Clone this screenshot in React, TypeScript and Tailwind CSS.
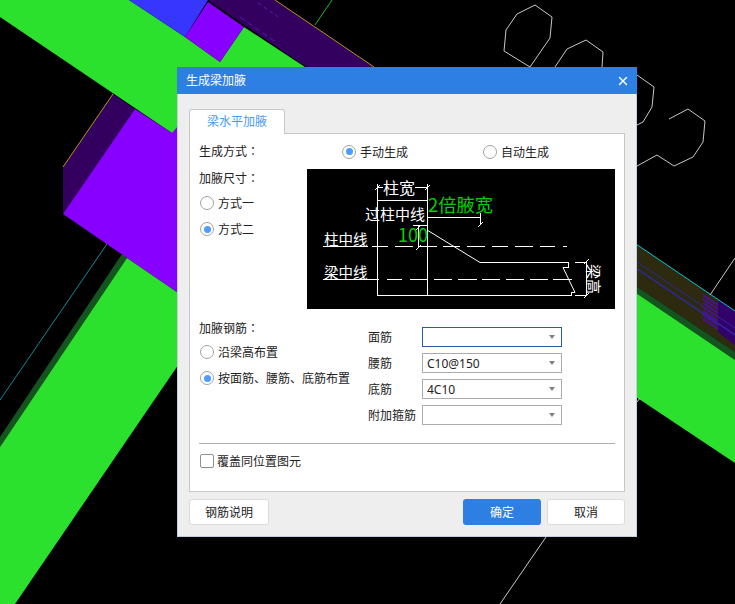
import { X } from "lucide-react";

const uiFont = "font-['Noto_Sans','Noto_Sans_CJK_SC',sans-serif]";

function Backdrop() {
  return (
    <svg className="absolute inset-0" width={735} height={604} viewBox="0 0 735 604">
      {/* upper left beams */}
      <polygon points="208,0 275,0 400,85 340,85 300,63" fill="#330060" />
      <polygon points="0,0 129,0 185,37 220,62 244,27 340,90 172,133 0,17" fill="#2ce02e" />
      <polygon points="129,0 208,0 185,37" fill="#3636ff" />
      <polygon points="208,2 244,27 220,62 185,37" fill="#8800ff" />
      <line x1="275" y1="0" x2="374" y2="67" stroke="#b8941a" strokeWidth="1" />
      <line x1="332" y1="0" x2="315" y2="25" stroke="#1fb52a" strokeWidth="1" />
      <line x1="258" y1="3" x2="278" y2="17" stroke="#4a1fb0" strokeWidth="1" strokeDasharray="4 3" />
      <line x1="240" y1="17" x2="277" y2="43" stroke="#4a1fb0" strokeWidth="1" strokeDasharray="6 3" />

      {/* column block */}
      <polygon points="63,167 113,94 135,109 63,214" fill="#330060" />
      <polygon points="63,214 135,109 172,133 200,100 260,140 200,308" fill="#8800ff" />
      <line x1="63" y1="167" x2="113" y2="94" stroke="#b8941a" strokeWidth="1" />
      <line x1="107" y1="244" x2="0" y2="400" stroke="#0f8a96" strokeWidth="1" />

      {/* lower left beam */}
      <polygon points="122,254 127,258 0,447 0,437" fill="#14551f" />
      <polygon points="127,258 200,308 200,333 15,604 0,604 0,447" fill="#2ce02e" />

      {/* right beam */}
      <polygon points="630,240 735,311 735,352 630,282" fill="#2d2a10" />
      <polygon points="718,300 735,311 735,345 718,332" fill="#34006a" />
      <polygon points="630,282 735,352 735,360 630,289" fill="#14551f" />
      <polygon points="630,289 735,360 735,463 630,393" fill="#2ce02e" />
      <line x1="630" y1="240" x2="735" y2="311" stroke="#00c8d8" strokeWidth="1" />
      <line x1="630" y1="257" x2="735" y2="328" stroke="#2a2a9a" strokeWidth="1" />
      <line x1="630" y1="264" x2="735" y2="335" stroke="#2a2aaa" strokeWidth="1.5" />
      {[295, 299, 303, 307, 311, 315, 319].map((y) => (
        <line key={y} x1="703" y1={y} x2="718" y2={y + 10} stroke="#4b0f9a" strokeWidth="2" />
      ))}

      {/* white outlines */}
      <g fill="none" stroke="#c8c8c8" strokeWidth="1">
        <polyline points="530,67 504,51 506,30 517,14 535,5 552,17 550,38 530,67" />
        <polyline points="555,67 567,49 586,40 603,52 602,67" />
        <polyline points="637,75 654,87 652,107 643,122 637,125" />
        <polyline points="669,119 688,109 705,121 703,142 693,157 674,166 657,155 637,166" />
        <line x1="735" y1="258" x2="710" y2="295" />
        <line x1="546" y1="537" x2="500" y2="604" />
        <line x1="637" y1="402" x2="640" y2="398" />
      </g>
    </svg>
  );
}

function Diagram() {
  const cad = "'Noto Sans CJK SC',sans-serif";
  return (
    <svg className="block bg-black" width={308} height={140} viewBox="307 169 308 140">
      <g stroke="#fff" strokeWidth="1" fill="none" shapeRendering="crispEdges">
        <path d="M377.5 184V295.5M427.5 184V295.5M377 200.5H428" />
        <path d="M377 187.5H383M415 187.5H428" />
        <path d="M427 217.5H480.5M480.5 213V225M413 225.5H428M418.5 225V247" />
        <path d="M323 246.5H368M323 279.5H379" />
        <path d="M480 262.5H568.5V267.5H563M575 292.5H571.5V295.5H377M575 262.5H587M575 295.5H587M586.5 262V295" />
      </g>
      <g stroke="#fff" strokeWidth="1" fill="none">
        <path d="M427 230L480 262.5M563 267.5L575 292.5" />
        <path d="M375 190L380 185M425 190L430 185M416 230L421 225M416 250L421 245M478 227L483 222M584 264L589 259M584 298L589 293" />
      </g>
      <g stroke="#fff" strokeWidth="1" fill="none" shapeRendering="crispEdges">
        <path d="M372 246.5H388M395 246.5H413M420 246.5H437M443 246.5H460M467 246.5H485M492 246.5H508M515 246.5H533M540 246.5H555M563 246.5H567" />
        <path d="M387 279.5H402M410 279.5H428M434 279.5H452M458 279.5H477M482 279.5H500M506 279.5H524M530 279.5H548M553 279.5H572" />
      </g>
      <g fontFamily={cad} fill="#fff">
        <text x="383" y="194" fontSize="16">柱宽</text>
        <text x="365" y="220" fontSize="15">过柱中线</text>
        <text x="324" y="245" fontSize="14.5">柱中线</text>
        <text x="324" y="278" fontSize="14.5">梁中线</text>
        <text transform="translate(588 264) rotate(90)" fontSize="15">梁高</text>
      </g>
      <g fontFamily={cad} fill="#00d000">
        <text x="428" y="212" fontSize="18" textLength={65} lengthAdjust="spacingAndGlyphs">2倍腋宽</text>
        <text x="398" y="242" fontSize="19" textLength={30} lengthAdjust="spacingAndGlyphs">100</text>
      </g>
    </svg>
  );
}

function Radio({ checked, label }: { checked?: boolean; label: string }) {
  return (
    <span className="flex items-center gap-1">
      <span className="flex size-[14px] shrink-0 items-center justify-center rounded-full border border-[#a3a3a3] bg-white">
        {checked ? <span className="size-[7px] rounded-full bg-[#4f9cff]" /> : null}
      </span>
      <span className="pt-[2px]">{label}</span>
    </span>
  );
}

function FieldLabel({ text }: { text: string }) {
  return (
    <span className="pt-[2px]">
      {text}
      <span className="font-['Noto_Sans_CJK_TC',sans-serif]">：</span>
    </span>
  );
}

function RebarField({ label, value, focused }: { label: string; value?: string; focused?: boolean }) {
  return (
    <div className="flex h-5 items-center">
      <span className="w-[54px] shrink-0 pt-[2px]">{label}</span>
      <div
        className={`flex h-5 w-[140px] items-center justify-between border bg-white pl-1 pr-[6px] ${
          focused ? "border-[#2a5ca8]" : "border-[#ababab]"
        }`}
      >
        <span className="pt-[2px]">{value}</span>
        <span className="h-0 w-0 border-x-[3px] border-t-[4px] border-x-transparent border-t-[#808080]" />
      </div>
    </div>
  );
}

export default function App() {
  return (
    <div className={`relative h-[604px] w-[735px] overflow-hidden bg-black text-xs text-[#222] ${uiFont}`}>
      <Backdrop />

      <div className="absolute left-[177px] top-[67px] flex h-[470px] w-[460px] flex-col border border-t-0 border-[#c3cede] bg-[#eeeeee]">
        <div className="-mx-px flex h-[27px] shrink-0 items-center justify-between bg-[#2d7fe3] pl-[9px] pr-[7px] text-white">
          <span>生成梁加腋</span>
          <X className="size-[14px]" strokeWidth={2.5} />
        </div>

        <div className="flex flex-col px-[11px] pt-[15px]">
          <div className="relative z-10 -mb-px flex h-[25px] w-[96px] items-center justify-center rounded-t-[3px] border border-b-0 border-[#c8c8c8] bg-white text-[#4a9af5]">
            梁水平加腋
          </div>

          <div className="h-[359px] border border-[#c8c8c8] bg-white px-[9px]">
            <div className="flex h-[35px] items-center">
              <div className="w-[143px]">
                <FieldLabel text="生成方式" />
              </div>
              <div className="w-[141px]">
                <Radio checked label="手动生成" />
              </div>
              <Radio label="自动生成" />
            </div>

            <div className="flex h-[140px]">
              <div className="w-[108px] pl-px">
                <div className="-ml-px flex h-4 items-center">
                  <FieldLabel text="加腋尺寸" />
                </div>
                <div className="mt-[5px] flex h-[26px] items-center">
                  <Radio label="方式一" />
                </div>
                <div className="flex h-[26px] items-center">
                  <Radio checked label="方式二" />
                </div>
              </div>
              <Diagram />
            </div>

            <div className="flex">
              <div className="w-[169px] pl-px">
                <div className="-ml-px mt-[10px] flex h-4 items-center">
                  <FieldLabel text="加腋钢筋" />
                </div>
                <div className="mt-1 flex h-[26px] items-center">
                  <Radio label="沿梁高布置" />
                </div>
                <div className="flex h-[26px] items-center">
                  <Radio checked label="按面筋、腰筋、底筋布置" />
                </div>
              </div>
              <div className="mt-[18px] flex flex-col gap-[6px]">
                <RebarField label="面筋" focused />
                <RebarField label="腰筋" value="C10@150" />
                <RebarField label="底筋" value="4C10" />
                <RebarField label="附加箍筋" />
              </div>
            </div>

            <div className="mt-[18px] h-px bg-[#b0b0b0]" />

            <div className="mt-2 flex items-center gap-[3px] pl-px">
              <span className="size-[14px] rounded-[2px] border border-[#8f8f8f] bg-white" />
              <span className="pt-[2px]">覆盖同位置图元</span>
            </div>
          </div>

          <div className="mt-[7px] flex h-[26px] gap-[6px]">
            <button className="mr-auto w-[80px] rounded-[3px] border border-[#dcdcdc] bg-white pt-[2px]">钢筋说明</button>
            <button className="w-[78px] rounded-[3px] bg-[#2d7fe3] pt-[2px] text-white">确定</button>
            <button className="w-[78px] rounded-[3px] border border-[#dcdcdc] bg-white pt-[2px]">取消</button>
          </div>
        </div>
      </div>
    </div>
  );
}
